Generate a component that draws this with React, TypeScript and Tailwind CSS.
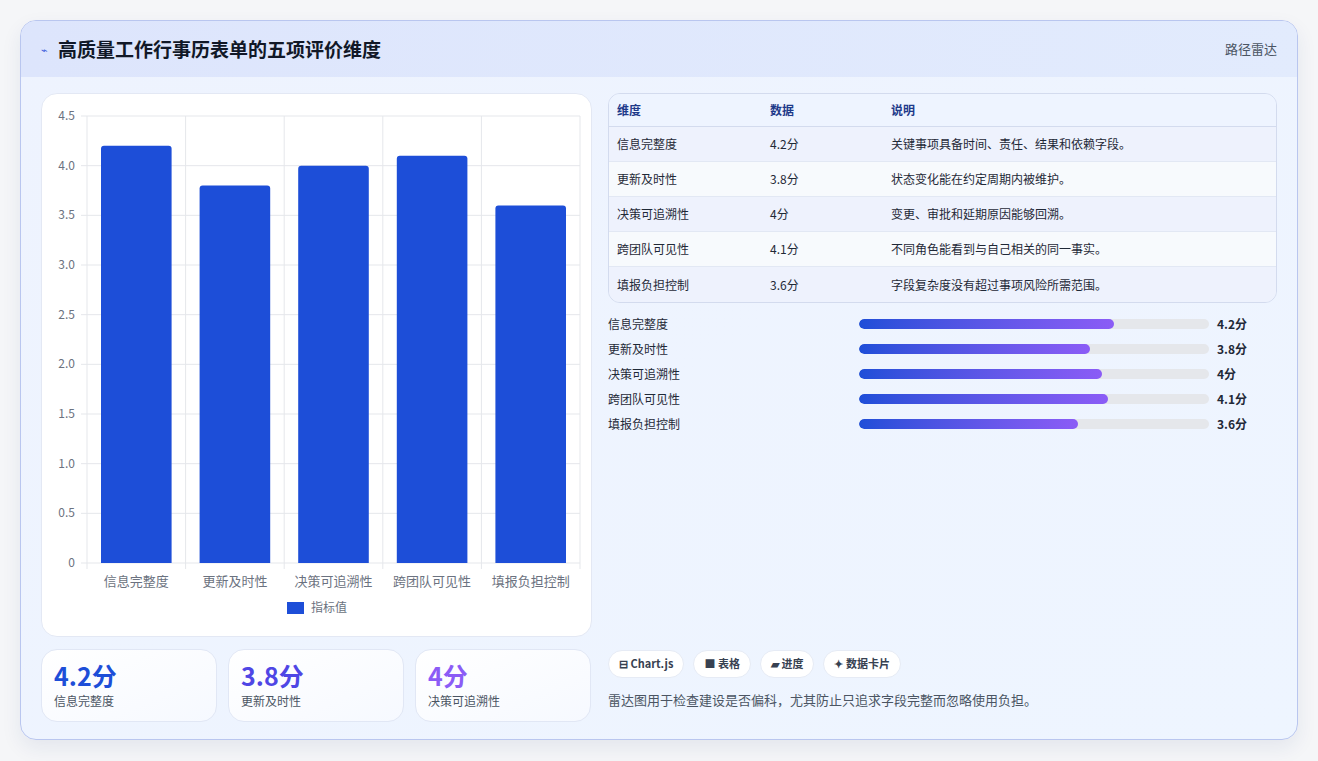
import React from "react";

const data = [
  { n: "信息完整度", v: 4.2, d: "关键事项具备时间、责任、结果和依赖字段。" },
  { n: "更新及时性", v: 3.8, d: "状态变化能在约定周期内被维护。" },
  { n: "决策可追溯性", v: 4, d: "变更、审批和延期原因能够回溯。" },
  { n: "跨团队可见性", v: 4.1, d: "不同角色能看到与自己相关的同一事实。" },
  { n: "填报负担控制", v: 3.6, d: "字段复杂度没有超过事项风险所需范围。" },
];
const font = { fontFamily: '"Noto Sans CJK SC", "Noto Sans", sans-serif' };

function Chart() {
  // svg coords relative to card at (40,93); size 550x543
  const x0 = 45, x1 = 538, yTop = 22, yBot = 469;
  const h = yBot - yTop;
  const cw = (x1 - x0) / 5;
  const ticks = [0, 0.5, 1, 1.5, 2, 2.5, 3, 3.5, 4, 4.5];
  return (
    <svg width="550" height="543" className="block">
      {ticks.map((t) => {
        const y = yBot - (t / 4.5) * h;
        return (
          <g key={t}>
            <line x1={x0 - 6} x2={x1} y1={y} y2={y} stroke="#e5e7eb" />
            <text x={x0 - 12} y={y + 4} textAnchor="end" fontSize="12" fill="#6b7280" style={font}>
              {t === 0 ? "0" : t.toFixed(1)}
            </text>
          </g>
        );
      })}
      {[0, 1, 2, 3, 4, 5].map((i) => (
        <line key={i} x1={x0 + i * cw} x2={x0 + i * cw} y1={yTop} y2={yBot + 6} stroke="#e5e7eb" />
      ))}
      {data.map((d, i) => {
        const bh = (d.v / 4.5) * h;
        const bx = x0 + i * cw + 14;
        return (
          <g key={d.n}>
            <path
              d={`M${bx},${yBot} L${bx},${yBot - bh + 3} Q${bx},${yBot - bh} ${bx + 3},${yBot - bh} L${bx + cw - 31},${yBot - bh} Q${bx + cw - 28},${yBot - bh} ${bx + cw - 28},${yBot - bh + 3} L${bx + cw - 28},${yBot} Z`}
              fill="#1d4ed8"
            />
            <text x={x0 + i * cw + cw / 2} y={492} textAnchor="middle" fontSize="13" fill="#6b7280" style={font}>
              {d.n}
            </text>
          </g>
        );
      })}
      <rect x="245" y="508" width="17" height="12" fill="#1d4ed8" />
      <text x="269" y="518" fontSize="12" fill="#6b7280" style={font}>指标值</text>
    </svg>
  );
}

export default function App() {
  const colors = ["text-[#1d4ed8]", "text-[#4f46e5]", "text-[#8b5cf6]"];
  return (
    <div className="w-[1318px] h-[761px] bg-[#f5f6f8] pt-5 pl-5" style={font}>
      <div className="w-[1278px] h-[720px] rounded-2xl border border-[#b9c6ef] bg-gradient-to-br from-[#eef3fe] to-[#eef5ff] overflow-hidden shadow-[0_8px_20px_rgba(30,50,120,0.08)]">
        <div className="h-[56px] flex items-center justify-between px-5 bg-gradient-to-r from-[#dde5fc] to-[#e2ebfd]">
          <div className="flex items-center gap-2.5">
            <span className="text-[#3b5bdb] text-[11px]">⌁</span>
            <span className="text-[19px] font-bold text-[#111827]">高质量工作行事历表单的五项评价维度</span>
          </div>
          <span className="text-[13px] text-[#4b5563]">路径雷达</span>
        </div>
        <div className="flex gap-4 px-5 pt-4">
          <div className="w-[551px] flex flex-col gap-3">
            <div className="h-[544px] bg-white rounded-2xl border border-[#e3e8f4]">
              <Chart />
            </div>
            <div className="flex gap-[11px]">
              {data.slice(0, 3).map((d, i) => (
                <div key={d.n} className="w-[176px] h-[73px] rounded-2xl border border-[#e1e7f5] bg-gradient-to-br from-white to-[#f6f9ff] px-3 pt-2.5">
                  <div className={`text-[25px] font-bold leading-[30px] ${colors[i]}`}>{d.v}分</div>
                  <div className="text-[12px] text-[#4b5563] mt-0.5">{d.n}</div>
                </div>
              ))}
            </div>
          </div>
          <div className="w-[673px] flex flex-col">
            <div className="rounded-xl border border-[#d3dbee] overflow-hidden text-[12px] text-[#1f2937]">
              <div className="flex h-[33px] items-center bg-[#eef4ff] border-b border-[#d3dbee] font-bold text-[#1e3a8a]">
                <div className="w-[161px] pl-2">维度</div>
                <div className="w-[121px]">数据</div>
                <div>说明</div>
              </div>
              {data.map((d, i) => (
                <div key={d.n} className={`flex h-[35px] items-center ${i % 2 === 0 ? "bg-[#eef2fd]" : "bg-[#f7fafd]"} ${i < 4 ? "border-b border-[#e2e8f4]" : ""}`}>
                  <div className="w-[161px] pl-2">{d.n}</div>
                  <div className="w-[121px]">{d.v}分</div>
                  <div>{d.d}</div>
                </div>
              ))}
            </div>
            <div className="mt-[12px] flex flex-col gap-[7px]">
              {data.map((d) => (
                <div key={d.n} className="flex items-center h-[18px] text-[12px]">
                  <div className="w-[251px] text-[#1f2937]">{d.n}</div>
                  <div className="w-[350px] h-[10px] rounded-full bg-[#e5e7eb] overflow-hidden">
                    <div className="h-full rounded-full bg-gradient-to-r from-[#1d4ed8] to-[#8b5cf6]" style={{ width: `${(d.v / 5.76) * 100}%` }} />
                  </div>
                  <div className="ml-2 font-bold text-[#1f2937]">{d.v}分</div>
                </div>
              ))}
            </div>
            <div className="mt-auto pb-[13px]">
              <div className="flex gap-[9px] text-[11px] font-bold text-[#374151]">
                <span className="h-[28px] px-2.5 flex items-center rounded-full bg-white border border-[#e6ebf5]">⊟ Chart.js</span>
                <span className="h-[28px] px-2.5 flex items-center rounded-full bg-white border border-[#e6ebf5]">■ 表格</span>
                <span className="h-[28px] px-2.5 flex items-center rounded-full bg-white border border-[#e6ebf5]">▰ 进度</span>
                <span className="h-[28px] px-2.5 flex items-center rounded-full bg-white border border-[#e6ebf5]">✦ 数据卡片</span>
              </div>
              <div className="mt-[12px] text-[13px] text-[#4b5563]">雷达图用于检查建设是否偏科，尤其防止只追求字段完整而忽略使用负担。</div>
            </div>
          </div>
        </div>
      </div>
    </div>
  );
}
